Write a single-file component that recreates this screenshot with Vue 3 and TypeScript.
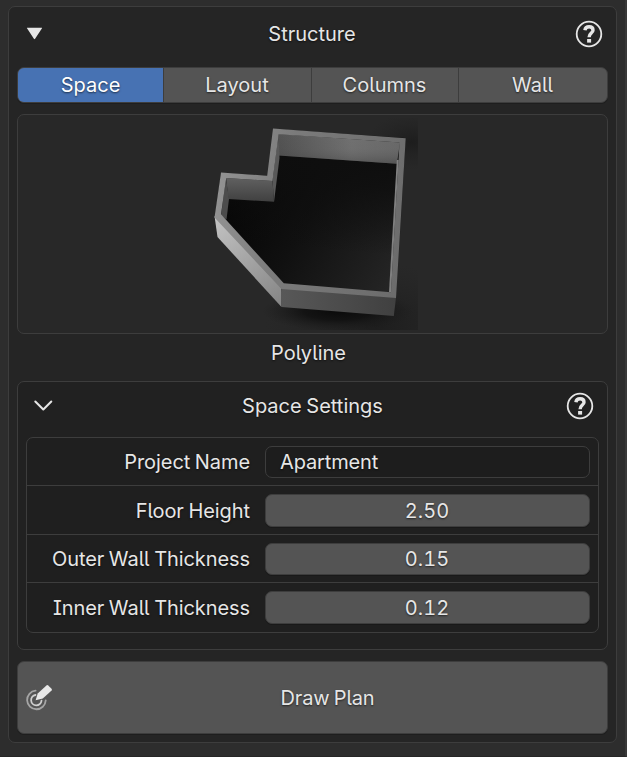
<script setup lang="ts">
import { ref } from 'vue'

interface Setting {
  label: string
  value: string
  kind: 'text' | 'number'
}

const tabs: string[] = ['Space', 'Layout', 'Columns', 'Wall']
const activeTab = ref('Space')

const settings = ref<Setting[]>([
  { label: 'Project Name', value: 'Apartment', kind: 'text' },
  { label: 'Floor Height', value: '2.50', kind: 'number' },
  { label: 'Outer Wall Thickness', value: '0.15', kind: 'number' },
  { label: 'Inner Wall Thickness', value: '0.12', kind: 'number' },
])
</script>

<template>
  <main class="editor">
    <section class="panel">
      <header class="panel-head">
        <svg class="collapse" width="18" height="14" viewBox="0 0 18 14">
          <path d="M2.200 .7H16.800Q17.400 .7 17 1.300L10.100 11.800Q9.500 12.600 8.900 11.800L2 1.300Q1.600 .7 2.200 .7Z" />
        </svg>
        <h1 class="title">Structure</h1>
        <svg class="help" width="28" height="28" viewBox="0 0 28 28">
          <circle cx="14" cy="14" r="12.3" />
          <path d="M9.9 10.3C10.2 7.8 11.8 6.8 14.1 6.8C16.6 6.8 18 8.2 18 10.2C18 13.2 14.1 13 14.1 17.2" />
          <rect x="12.1" y="19" width="4" height="3.6" />
        </svg>
      </header>

      <nav class="tabs">
        <button
          v-for="tab in tabs"
          :key="tab"
          class="tab"
          :class="{ active: tab === activeTab }"
          @click="activeTab = tab"
        >{{ tab }}</button>
      </nav>

      <div class="preview">
        <svg class="render" width="230" height="217" viewBox="200 115 230 217">
          <defs>
            <linearGradient id="floor" gradientUnits="userSpaceOnUse" x1="235" y1="200" x2="390" y2="290">
              <stop offset="0" stop-color="#060606" />
              <stop offset=".4" stop-color="#101010" />
              <stop offset="1" stop-color="#252525" />
            </linearGradient>
            <linearGradient id="floorTop" gradientUnits="userSpaceOnUse" x1="330" y1="154" x2="322" y2="250">
              <stop offset="0" stop-color="#0e0e0e" />
              <stop offset=".3" stop-color="#0e0e0e" stop-opacity=".8" />
              <stop offset="1" stop-color="#0e0e0e" stop-opacity="0" />
            </linearGradient>
            <linearGradient id="back" x1="0" y1="0" x2="1" y2="0">
              <stop offset="0" stop-color="#4d4d4d" />
              <stop offset=".6" stop-color="#707070" />
              <stop offset="1" stop-color="#686868" />
            </linearGradient>
            <linearGradient id="backShade" x1="0" y1="0" x2="0" y2="1">
              <stop offset="0" stop-color="#777" stop-opacity=".15" />
              <stop offset=".5" stop-color="#666" stop-opacity=".15" />
              <stop offset="1" stop-color="#333" stop-opacity=".4" />
            </linearGradient>
            <linearGradient id="niche" x1="0" y1="0" x2="0" y2="1">
              <stop offset="0" stop-color="#606060" />
              <stop offset="1" stop-color="#404040" />
            </linearGradient>
            <linearGradient id="diagonal" gradientUnits="userSpaceOnUse" x1="215" y1="220" x2="280" y2="306">
              <stop offset="0" stop-color="#c2c2c2" />
              <stop offset="1" stop-color="#858585" />
            </linearGradient>
            <linearGradient id="front" x1="0" y1="0" x2="1" y2="0">
              <stop offset="0" stop-color="#585858" />
              <stop offset="1" stop-color="#404040" />
            </linearGradient>
            <linearGradient id="rim" gradientUnits="userSpaceOnUse" x1="216" y1="200" x2="405" y2="230">
              <stop offset="0" stop-color="#929292" />
              <stop offset=".35" stop-color="#7b7b7b" />
              <stop offset="1" stop-color="#6c6c6c" />
            </linearGradient>
            <radialGradient id="shadow">
              <stop offset="0" stop-color="#0a0a0a" />
              <stop offset=".45" stop-color="#101010" stop-opacity=".85" />
              <stop offset="1" stop-color="#1c1c1c" stop-opacity="0" />
            </radialGradient>
            <radialGradient id="ambient">
              <stop offset="0" stop-color="#1d1d1d" />
              <stop offset="1" stop-color="#222" stop-opacity="0" />
            </radialGradient>
            <clipPath id="frame"><rect x="208" y="118" width="210" height="212" /></clipPath>
          </defs>
          <g clip-path="url(#frame)">
            <ellipse cx="412" cy="142" rx="46" ry="28" fill="url(#ambient)" />
            <ellipse cx="375" cy="325" rx="110" ry="62" fill="url(#ambient)" />
            <ellipse cx="338" cy="311" rx="76" ry="20" fill="url(#shadow)" />
          </g>
          <path d="M273.5 129L405.5 138L396.5 298L282 292L215 217L221 173L269 176Z" fill="url(#floor)" />
          <path d="M273.5 129L405.5 138L396.5 298L282 292L215 217L221 173L269 176Z" fill="url(#floorTop)" />
          <path d="M278.5 134L400 142.500L396.800 163.700L278.500 155.500Z" fill="url(#back)" />
          <path d="M278.5 134L400 142.500L396.800 163.700L278.500 155.500Z" fill="url(#backShade)" />
          <path d="M226 178L272.500 181L274 201.700L228.500 199Z" fill="url(#niche)" />
          <path d="M226 178L229 199L226.500 219.500L221 215.500Z" fill="#4c4c4c" />
          <path d="M272.500 180L278.500 134L279.500 158L274 201.700Z" fill="#595959" />
          <path d="M214.500 216L281.500 288L281.500 307L217.500 237Z" fill="url(#diagonal)" />
          <path d="M281.500 288L396 297.500L393.800 316L281.500 307Z" fill="url(#front)" />
          <path
            fill="url(#rim)"
            fill-rule="evenodd"
            d="M273 128.500L405.700 138.200L396 298L281.500 289L214.500 217.500L221 172.600L267.200 175.700ZM278.700 134.300L272.500 181L226.200 178L221 214.300L283.800 283.200L391 292.200L399.500 142.500Z"
          />
          <path d="M389 292L391 292.200L398.600 160L396.800 160Z" fill="#808080" />
        </svg>
      </div>
      <p class="caption">Polyline</p>

      <section class="settings">
        <header class="settings-head">
          <svg class="chevron" width="20" height="14" viewBox="0 0 20 14">
            <path d="M2.300 2.500L10.300 10.500L18.300 2.500" />
          </svg>
          <h2 class="title">Space Settings</h2>
          <svg class="help" width="28" height="28" viewBox="0 0 28 28">
            <circle cx="14" cy="14" r="12.3" />
            <path d="M9.9 10.3C10.2 7.8 11.8 6.8 14.1 6.8C16.6 6.8 18 8.2 18 10.2C18 13.2 14.1 13 14.1 17.2" />
            <rect x="12.1" y="19" width="4" height="3.6" />
          </svg>
        </header>
        <div class="table">
          <div v-for="item in settings" :key="item.label" class="row">
            <span class="label">{{ item.label }}</span>
            <div class="field" :class="item.kind">{{ item.value }}</div>
          </div>
        </div>
      </section>

      <button class="draw">
        <svg class="draw-icon" width="30" height="30" viewBox="0 0 30 30">
          <path class="ring outer" d="M9.600 7.700A9.300 9.300 0 1 0 19.700 17.500" />
          <path class="ring" d="M9.500 12A5.200 5.200 0 1 0 15.500 17.700" />
          <path class="pen" d="M9.600 17.200L11.700 10.600L20.700 2.300Q21.500 1.700 22.200 2.400L25.600 5.800Q26.300 6.600 25.600 7.400L16.800 15.500Z" />
        </svg>
        <span>Draw Plan</span>
      </button>
    </section>
  </main>
</template>

<style>
body {
  margin: 0;
  background: #2d2d2d;
}
</style>

<style scoped>
.editor,
.editor * {
  box-sizing: border-box;
}

.editor {
  height: 757px;
  padding: 6px 9px 13px 8px;
  background: #2d2d2d;
  border-right: 2px solid #383838;
  border-bottom: 1px solid #262626;
  color: #e6e6e6;
  font: 400 20px/24px Inter, sans-serif;
  font-feature-settings: 'cv05', 'cv08';
  text-shadow: 0 1px 2px rgba(0, 0, 0, 0.6);
  overflow: hidden;
}

.panel {
  display: flex;
  flex-direction: column;
  height: 737px;
  width: 609px;
  padding: 0 8px;
  background: #252525;
  border: 1px solid #3d3d3d;
  border-radius: 7px;
}

.panel-head,
.settings-head {
  display: grid;
  grid-template-columns: 28px 1fr 28px;
  align-items: center;
}

.panel-head {
  height: 54px;
  padding: 0 5px 0 8px;
}

.title {
  margin: 0;
  padding-right: 4px;
  font-size: inherit;
  font-weight: 400;
  text-align: center;
}

.settings-head .title {
  padding-right: 2px;
  word-spacing: -1px;
}

.collapse {
  fill: #e6e6e6;
}

.help circle,
.help path {
  fill: none;
  stroke: #e6e6e6;
  stroke-width: 1.8;
}

.help path {
  stroke-width: 3.4;
}

.help rect {
  fill: #e6e6e6;
}

.tabs {
  display: grid;
  grid-template-columns: 145px 148px 147px 1fr;
  height: 36px;
  margin-top: 6px;
  border: 1px solid #3d3d3d;
  border-radius: 7px;
  background: #545454;
  box-shadow: 0 1px 0 #1e1e1e;
  overflow: hidden;
}

.tab,
.draw {
  margin: 0;
  padding: 0;
  border: 0;
  background: none;
  color: inherit;
  font: inherit;
  font-feature-settings: inherit;
  text-shadow: inherit;
}

.tab + .tab {
  padding-right: 1px;
  border-left: 1px solid #3d3d3d;
}

.tab.active {
  background: #4772b3;
  color: #fff;
}

.preview {
  display: flex;
  justify-content: center;
  height: 220px;
  margin-top: 11px;
  border: 1px solid #3d3d3d;
  border-radius: 7px;
  background: #282828;
}

.render {
  margin-left: 4px;
}

.caption {
  margin: 7px 0 0;
  padding-right: 8px;
  text-align: center;
}

.settings {
  height: 269px;
  margin-top: 16px;
  padding: 0 8px;
  border: 1px solid #3d3d3d;
  border-radius: 7px;
  background: #212121;
}

.settings-head {
  height: 48px;
  padding: 0 5px 0 7px;
}

.chevron {
  fill: none;
  stroke: #e6e6e6;
  stroke-width: 2;
  stroke-linecap: round;
  stroke-linejoin: round;
}

.table {
  display: grid;
  grid-template-rows: 47px 49px 48px 50px;
  height: 196px;
  margin-top: 7px;
  border: 1px solid #3d3d3d;
  border-radius: 7px;
  background: #1f1f1f;
}

.row {
  display: grid;
  grid-template-columns: 223px 325px;
  column-gap: 15px;
  padding: 8px 0 7px;
}

.row:last-child {
  padding-bottom: 8px;
}

.row + .row {
  border-top: 1px solid #3d3d3d;
}

.label {
  line-height: 32px;
  letter-spacing: -0.08px;
  word-spacing: -0.9px;
  text-align: right;
}

.field {
  border: 1px solid #3d3d3d;
  border-radius: 7px;
  line-height: 30px;
}

.field.text {
  padding-left: 14px;
  background: #1d1d1d;
  letter-spacing: -0.14px;
}

.field.number {
  padding-right: 1px;
  background: #545454;
  font-feature-settings: 'tnum';
  text-align: center;
  box-shadow: 0 1px 0 #191919;
}

.row:nth-child(even) .label,
.row:nth-child(even) .field {
  padding-top: 1px;
}

.draw {
  display: grid;
  grid-template-columns: 30px 1fr;
  align-items: center;
  height: 73px;
  margin-top: 11px;
  padding: 0 8px;
  border: 1px solid #3d3d3d;
  border-radius: 7px;
  background: #545454;
  box-shadow: 0 1px 0 #1e1e1e;
  letter-spacing: -0.18px;
  word-spacing: -1px;
}

.draw-icon {
  overflow: visible;
}

.ring {
  fill: none;
  stroke: #cfcfcf;
  stroke-width: 1.8;
  stroke-linecap: round;
}

.ring.outer {
  stroke: #a5a5a5;
}

.pen {
  fill: #e8e8e8;
}
</style>
